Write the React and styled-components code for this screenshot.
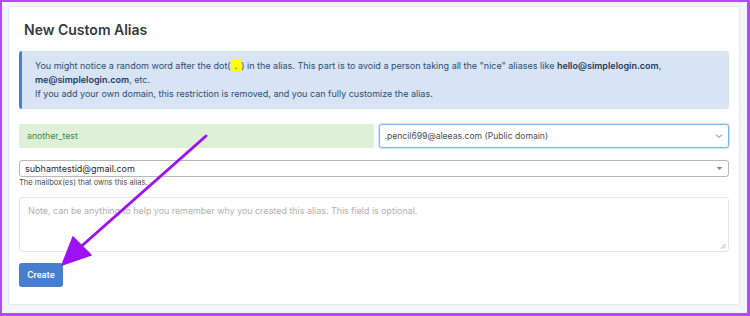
import React from 'react';
import styled, { createGlobalStyle } from 'styled-components';

const GlobalStyle = createGlobalStyle`
  body {
    margin: 0;
    font-family: Inter, "Noto Sans", sans-serif;
  }
`;

const Frame = styled.div`
  position: relative;
  box-sizing: border-box;
  width: 750px;
  height: 316px;
  border: solid #b04cf3;
  border-width: 2px 3px 3px 2px;
  background: #f3f5f9;
  padding: 4px 7px 8px 6px;
`;

const Card = styled.div`
  box-sizing: border-box;
  height: 100%;
  background: #fff;
  border: 1px solid #e4e7ee;
  border-radius: 2px;
  padding: 0 10px;
  display: flex;
  flex-direction: column;
`;

const Title = styled.h3`
  margin: 0;
  padding: 14px 5px 0;
  height: 30px;
  font-size: 14px;
  font-weight: 600;
  color: #363b42;
`;

const Alert = styled.div`
  background: #d8e4f4;
  border-left: 3px solid #467fcf;
  border-radius: 3px;
  padding: 8px 13px;
  font-size: 9px;
  line-height: 14px;
  color: #2d4c78;
`;

const Strong = styled.b`
  font-weight: 600;
  color: #1f3a62;
`;

const Mark = styled.span`
  background: #ffff00;
  padding: 1px 4px;
`;

const Row = styled.div`
  display: flex;
  gap: 5px;
  margin-top: 15px;
`;

const AliasInput = styled.div`
  flex: 1;
  box-sizing: border-box;
  height: 24px;
  background: #def0d8;
  border-radius: 2px;
  padding: 0 8px;
  display: flex;
  align-items: center;
  font-size: 8.7px;
  color: #3f8a3f;
`;

const Select = styled.div`
  box-sizing: border-box;
  display: flex;
  align-items: center;
  justify-content: space-between;
  background: #fff;
  color: ${p => (p.$focus ? '#495057' : '#2a2a2a')};
  border: 1px solid ${p => (p.$focus ? '#7fb4f2' : '#b8b8b8')};
  box-shadow: ${p => (p.$focus ? '0 0 0 1px #cfe3fb' : 'none')};
  border-radius: 3px;
  height: ${p => p.$h}px;
  padding: 0 5px;
  font-size: ${p => (p.$focus ? 8.6 : 9)}px;
  flex: ${p => (p.$focus ? 1 : 'none')};
`;

const Field = styled.div`
  margin-top: 12px;
`;

const Help = styled.div`
  font-size: 7.5px;
  line-height: 9px;
  color: #4a4a4a;
  margin-top: 1px;
`;

const Note = styled.div`
  position: relative;
  box-sizing: border-box;
  margin-top: 10px;
  height: 55px;
  border: 1px solid #e6e6e6;
  border-radius: 3px;
  padding: 7px 8px;
  font-size: 8.9px;
  color: #b0b0b0;
`;

const Grip = styled.svg`
  position: absolute;
  right: 2px;
  bottom: 2px;
`;

const Button = styled.button`
  align-self: flex-start;
  margin-top: 11px;
  width: 44px;
  height: 24px;
  border: none;
  border-radius: 3px;
  background: #467fcf;
  color: #fff;
  font-family: inherit;
  font-size: 8.5px;
  font-weight: 600;
  padding: 0;
`;

const Overlay = styled.svg`
  position: absolute;
  left: 0;
  top: 0;
  pointer-events: none;
`;

export default function App() {
  return (
    <>
      <GlobalStyle />
      <Frame>
        <Card>
          <Title>New Custom Alias</Title>
          <Alert>
            You might notice a random word after the dot(<Mark>.</Mark>) in the alias. This part is to avoid a person taking all the "nice" aliases like <Strong>hello@simplelogin.com</Strong>,
            <br />
            <Strong>me@simplelogin.com</Strong>, etc.
            <br />
            If you add your own domain, this restriction is removed, and you can fully customize the alias.
          </Alert>
          <Row>
            <AliasInput>another_test</AliasInput>
            <Select $focus $h={24}>
              <span>.pencil699@aleeas.com (Public domain)</span>
              <svg width="8" height="6" viewBox="0 0 8 6">
                <path d="M1 1.5 L4 4.5 L7 1.5" fill="none" stroke="#777" strokeWidth="1" />
              </svg>
            </Select>
          </Row>
          <Field>
            <Select $h={17}>
              <span>subhamtestid@gmail.com</span>
              <svg width="7" height="5" viewBox="0 0 7 5">
                <path d="M0.5 1 L6.5 1 L3.5 4 Z" fill="#888" />
              </svg>
            </Select>
            <Help>The mailbox(es) that owns this alias.</Help>
          </Field>
          <Note>
            Note, can be anything to help you remember why you created this alias. This field is optional.
            <Grip width="6" height="6" viewBox="0 0 6 6">
              <path d="M1 5.5 L5.5 1 M3.5 5.5 L5.5 3.5" stroke="#999" strokeWidth="0.8" />
            </Grip>
          </Note>
          <Button>Create</Button>
        </Card>
        <Overlay width="750" height="316" viewBox="0 0 750 316">
          <line x1="204" y1="134" x2="74" y2="249" stroke="#9c12f2" strokeWidth="3" strokeLinecap="round" />
          <path d="M60 263 L71 235 L89 253 Z" fill="#9c12f2" stroke="#9c12f2" strokeWidth="1.5" strokeLinejoin="round" />
        </Overlay>
      </Frame>
    </>
  );
}
